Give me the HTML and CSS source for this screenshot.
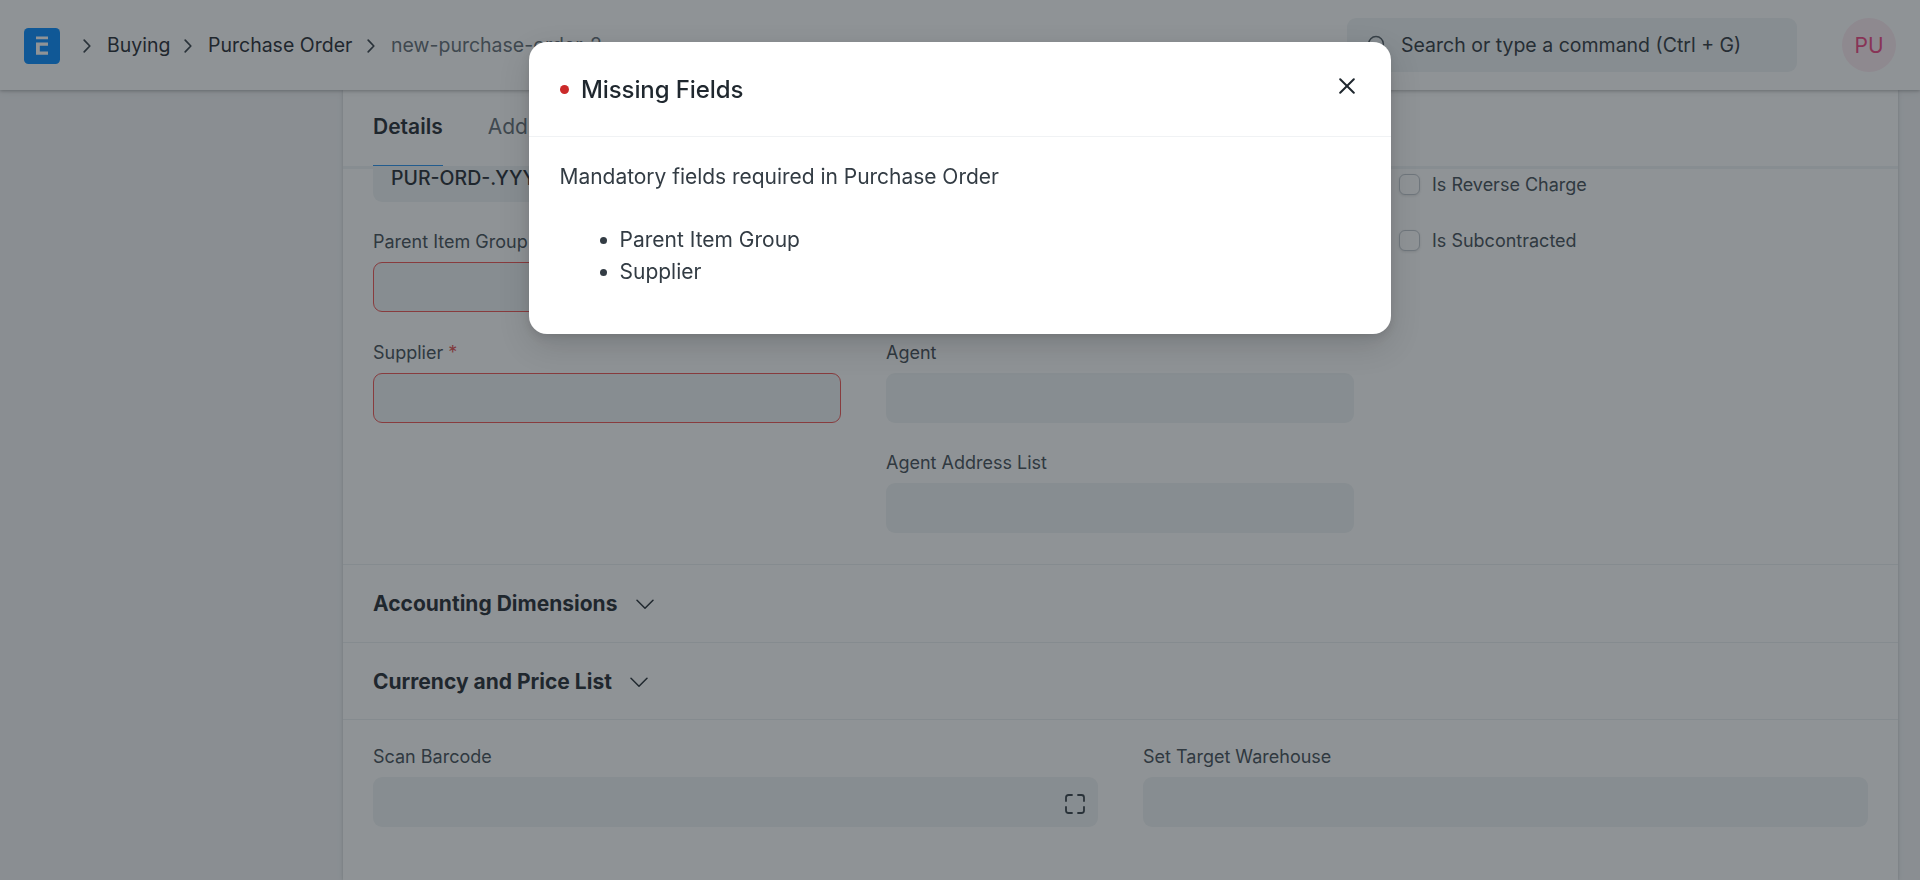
FILE: index.html
```html
<!DOCTYPE html>
<html lang="en">
<head>
<meta charset="utf-8">
<title>Purchase Order</title>
<link rel="stylesheet" href="styles.css">
</head>
<body>
<header class="navbar">
  <svg class="logo" width="36" height="36" viewBox="0 0 36 36"><rect width="36" height="36" rx="4.5" fill="#0089ff"/><path d="M12 8.500h12v2.800H12zM12 14.600h12v3.200h-8.200v5.600H24v3.400H12z" fill="#fff"/></svg>
  <nav class="crumbs">
    <svg class="sep" width="8" height="14" viewBox="0 0 8 14"><path d="M1.2 1.2 6.8 7l-5.6 5.8"/></svg>
    <span class="crumb buying">Buying</span>
    <svg class="sep" width="8" height="14" viewBox="0 0 8 14"><path d="M1.2 1.2 6.8 7l-5.6 5.8"/></svg>
    <span class="crumb order">Purchase Order</span>
    <svg class="sep" width="8" height="14" viewBox="0 0 8 14"><path d="M1.2 1.2 6.8 7l-5.6 5.8"/></svg>
    <span class="crumb current">new-purchase-order-2</span>
  </nav>
  <div class="search">
    <svg width="20" height="20" viewBox="0 0 20 20"><circle cx="9" cy="9" r="7.4"/><path d="m14.4 14.4 4.4 4.4"/></svg>
    <span>Search or type a command (Ctrl + G)</span>
  </div>
  <div class="avatar">PU</div>
</header>

<main class="card">
  <div class="tabs">
    <div class="tab active">Details</div>
    <div class="tab">Address &amp; Contact</div>
  </div>
  <section class="section first">
    <div class="columns three">
      <div class="column scrolled">
        <div class="field"><div class="input">PUR-ORD-.YYYY.-</div></div>
        <div class="field"><div class="label">Parent Item Group <b>*</b></div><div class="input invalid"></div></div>
        <div class="field"><div class="label">Supplier <b>*</b></div><div class="input invalid"></div></div>
      </div>
      <div class="column agents">
        <div class="field"><div class="label">Agent</div><div class="input"></div></div>
        <div class="field"><div class="label">Agent Address List</div><div class="input"></div></div>
      </div>
      <div class="column checks">
        <div class="check"><span class="box"></span>Is Reverse Charge</div>
        <div class="check"><span class="box"></span>Is Subcontracted</div>
      </div>
    </div>
  </section>
  <section class="section collapsed">
    <h2>Accounting Dimensions</h2>
    <svg class="chev" width="18" height="11" viewBox="0 0 18 11"><path d="m1 1.2 8 8 8-8"/></svg>
  </section>
  <section class="section collapsed second">
    <h2>Currency and Price List</h2>
    <svg class="chev" width="18" height="11" viewBox="0 0 18 11"><path d="m1 1.2 8 8 8-8"/></svg>
  </section>
  <section class="section items">
    <div class="columns two">
      <div class="field"><div class="label">Scan Barcode</div>
        <div class="input scan"><svg width="20" height="20" viewBox="0 0 20 20"><path d="M1 7V3.500Q1 1 3.500 1H7M13 1h3.500Q19 1 19 3.500V7M19 13v3.500Q19 19 16.500 19H13M7 19H3.500Q1 19 1 16.500V13"/></svg></div>
      </div>
      <div class="field"><div class="label">Set Target Warehouse</div><div class="input"></div></div>
    </div>
  </section>
</main>

<div class="backdrop">
  <div class="modal" role="dialog">
    <div class="modal-head">
      <span class="dot"></span>
      <h1>Missing Fields</h1>
      <svg class="close" width="16" height="16" viewBox="0 0 16 16"><path d="m1.200 1.200 13.600 13.600M14.800 1.200 1.200 14.800"/></svg>
    </div>
    <div class="modal-body">
      <p>Mandatory fields required in Purchase Order</p>
      <ul>
        <li>Parent Item Group</li>
        <li>Supplier</li>
      </ul>
    </div>
  </div>
</div>
</body>
</html>
```
FILE: styles.css
```css
* { box-sizing: border-box; }
body {
  margin: 0;
  height: 880px;
  overflow: hidden;
  background: #f4f5f7;
  color: #1f272e;
  font: 400 21px/31.5px Inter, sans-serif;
}
svg { flex: none; fill: none; stroke: #1f272e; stroke-width: 1.5; stroke-linecap: round; stroke-linejoin: round; }

.navbar {
  position: relative;
  z-index: 2;
  display: flex;
  align-items: center;
  height: 90px;
  padding: 0 24px;
  background: #fff;
  box-shadow: 0 1px 3px rgba(0, 0, 0, .25), 0 2px 8px rgba(0, 0, 0, .08);
}
.logo { stroke: none; margin-top: 2px; }
.crumbs { display: flex; align-items: center; margin-left: 23px; font-size: 19.5px; white-space: nowrap; }
.crumb { padding-top: 2px; }
.sep { margin: 2px 16px 0 0; stroke: #333c44; stroke-width: 1.7; }
.buying { width: 77px; }
.order { width: 159px; }
.current { color: #606a72; }
.search {
  display: flex;
  align-items: center;
  gap: 14px;
  width: 450px;
  height: 54px;
  margin-left: auto;
  padding: 0 19px 0 20px;
  border-radius: 9px;
  background: #eff3f4;
  color: #2c343b;
  font-size: 19.5px;
  white-space: nowrap;
}
.search span { padding-top: 1px; }
.search svg { stroke: #505a62; }
.avatar {
  width: 54px;
  height: 54px;
  margin-left: 45px;
  border-radius: 50%;
  background: #fdeaf1;
  color: #f0407f;
  font-size: 21px;
  line-height: 56px;
  text-align: center;
}

.card {
  width: 1555px;
  height: 790px;
  margin-left: 343px;
  background: #fff;
  box-shadow: 0 0 2px rgba(25, 39, 52, .18), 0 1px 6px rgba(25, 39, 52, .1);
}
.tabs {
  position: relative;
  z-index: 1;
  display: flex;
  gap: 45px;
  height: 76px;
  padding: 0 30px;
  box-shadow: 0 3px 0 #eff3f4;
}
.tab { padding-top: 21px; color: #606a72; white-space: nowrap; }
.tab.active { border-bottom: 1px solid #2490ef; color: #1f272e; font-weight: 600; }

.section { padding: 0 30px; border-top: 1px solid #ebeef0; }
.section.first { height: 398px; border: 0; overflow: hidden; }
.columns { display: grid; gap: 45px; }
.three { grid-template-columns: repeat(3, 468px); }
.two { grid-template-columns: 725px 725px; }
.scrolled { margin-top: -14px; }
.agents { padding-top: 171.5px; }
.checks { padding-top: 3px; }
.field { height: 110.5px; }
.scrolled .field:first-child { height: 75px; }
.label { height: 35px; padding-top: 1px; color: #404a52; font-size: 18px; line-height: 27px; }
.label b { color: #e24c4c; font-weight: 400; }
.input {
  height: 50px;
  padding: 0 18px;
  border-radius: 9px;
  background: #eff3f4;
  color: #1f272e;
  font-size: 19.5px;
  font-weight: 500;
  line-height: 52px;
}
.invalid { border: 1px solid #f0504f; }
.check { display: flex; align-items: center; gap: 12px; height: 31px; margin-bottom: 25px; color: #404a52; font-size: 18px; }
.box { width: 21px; height: 21px; border: 1px solid #c0c6cc; border-radius: 6px; background: #fff; box-shadow: 0 1px 3px rgba(0, 0, 0, .12); }

.collapsed { display: flex; align-items: center; gap: 19px; height: 78px; }
.collapsed.second { height: 77px; gap: 18px; }
h2 { margin: 0; padding-top: 1px; font-size: 21px; font-weight: 700; line-height: 32px; }
.second h2 { padding-top: 2px; }
.chev { margin-top: 2px; }
.items { padding-top: 21px; }
.items .columns { padding-top: 1px; }
.scan { display: flex; align-items: center; justify-content: flex-end; padding: 4px 13px 0 0; }
.scan svg { stroke: #333c44; stroke-width: 1.8; }

.backdrop { position: fixed; inset: 0; z-index: 5; padding-top: 42px; background: rgba(31, 39, 46, .5); }
.modal {
  width: 862px;
  height: 292px;
  margin-left: 529px;
  border-radius: 18px;
  background: #fff;
  box-shadow: 0 12px 32px rgba(0, 0, 0, .14), 0 3px 8px rgba(0, 0, 0, .1);
}
.modal-head { display: flex; align-items: center; height: 95px; padding: 0 36px 0 31px; border-bottom: 1px solid #f0f2f4; }
.dot { width: 9px; height: 9px; border-radius: 50%; background: #cb2929; }
h1 { flex: 1; margin: 1px 0 0 12px; font-size: 24px; font-weight: 500; line-height: 36px; letter-spacing: -.1px; }
.close { margin-top: -7px; stroke-width: 2; }
.modal-body { padding: 24px 30.500px; color: #333c44; }
.modal-body p { margin: 0; letter-spacing: -.03px; }
.modal-body ul { margin: 31px 0 0; padding-left: 60px; line-height: 32px; }
```
